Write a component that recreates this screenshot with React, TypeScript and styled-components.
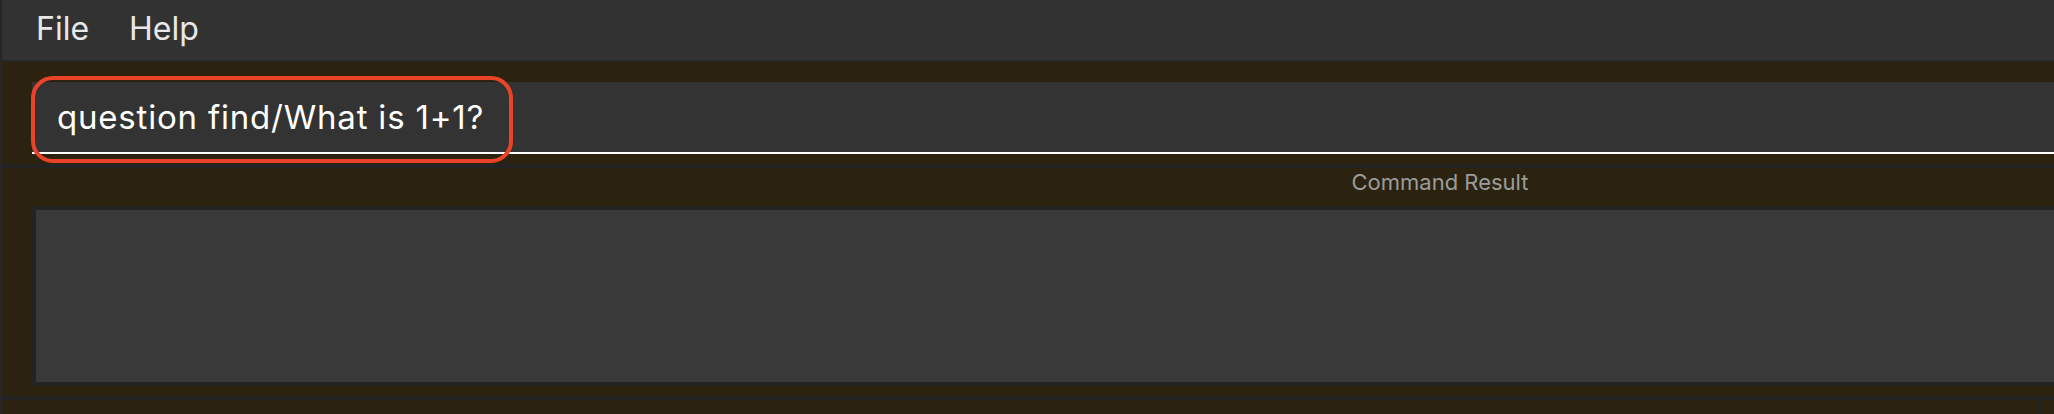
import React from "react";
import styled, { createGlobalStyle } from "styled-components";

const Global = createGlobalStyle`
  html, body { margin: 0; padding: 0; background: #2b2310; overflow: hidden; }
  body { font-family: Inter, "Noto Sans", sans-serif; }
  * { box-sizing: border-box; }
`;

const Window = styled.div`
  width: 2848px;
  height: 414px;
  display: flex;
  flex-direction: column;
  border-left: 2px solid #262626;
  background: #2b2310;
  overflow: hidden;
`;

const MenuBar = styled.div`
  height: 62px;
  flex: none;
  display: flex;
  align-items: center;
  gap: 40px;
  padding-left: 34px;
  background: #323232;
  border-bottom: 2px solid #262626;
`;

const MenuItem = styled.span`
  font-size: 32px;
  color: #e8e8e8;
  line-height: 1;
  padding-bottom: 3px;
`;

const CommandPane = styled.div`
  flex: none;
  height: 106px;
  padding: 20px 0 10px 30px;
  border-bottom: 4px solid #232323;
  position: relative;
`;

const CommandInput = styled.div`
  height: 72px;
  display: flex;
  align-items: center;
  padding-left: 25px;
  background: #333333;
  border-bottom: 2px solid #ffffff;
  color: #ffffff;
  font-size: 33px;
  letter-spacing: 0.8px;
`;

const Highlight = styled.div`
  position: absolute;
  left: 29px;
  top: 14px;
  width: 482px;
  height: 87px;
  border: 4.5px solid #ea4328;
  border-radius: 22px;
  pointer-events: none;
`;

const ResultPane = styled.div`
  flex: none;
  height: 232px;
  padding: 0 0 10px 30px;
  display: flex;
  flex-direction: column;
  border-bottom: 4px solid #232323;
`;

const ResultLabel = styled.div`
  height: 38px;
  display: flex;
  align-items: center;
  justify-content: center;
  padding-bottom: 10px;
  color: #9b9b9b;
  font-size: 22px;
`;

const ResultBox = styled.div`
  flex: 1;
  background: #393939;
  border: 4px solid #232323;
`;

const StatusBar = styled.div`
  flex: 1;
  display: grid;
  grid-template-columns: 2036px 4px 1fr;
`;

const StatusDivider = styled.div`
  background: #232323;
`;

export default function App() {
  return (
    <>
      <Global />
      <Window>
        <MenuBar>
          <MenuItem>File</MenuItem>
          <MenuItem>Help</MenuItem>
        </MenuBar>
        <CommandPane>
          <CommandInput>question find/What is 1+1?</CommandInput>
          <Highlight />
        </CommandPane>
        <ResultPane>
          <ResultLabel>Command Result</ResultLabel>
          <ResultBox />
        </ResultPane>
        <StatusBar>
          <div />
          <StatusDivider />
          <div />
        </StatusBar>
      </Window>
    </>
  );
}
